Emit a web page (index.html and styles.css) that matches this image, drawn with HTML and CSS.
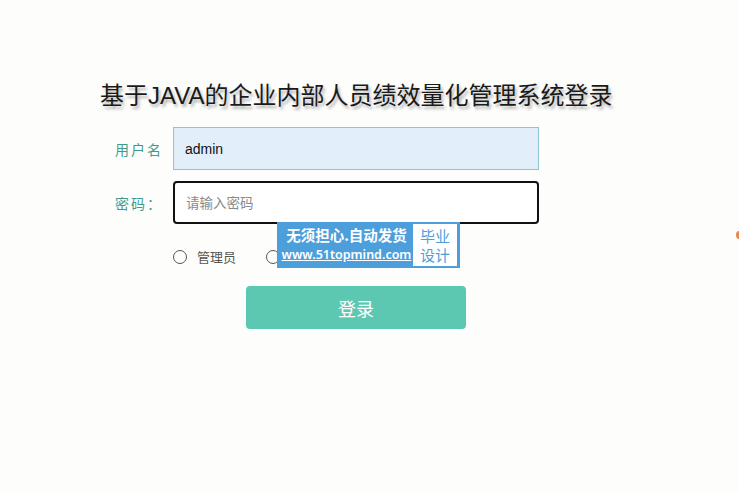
FILE: index.html
```html
<!DOCTYPE html>
<html lang="zh-CN">
<head>
  <meta charset="UTF-8" />
  <meta name="viewport" content="width=device-width, initial-scale=1.0" />
  <title>系统登录</title>
  <link rel="stylesheet" href="styles.css">
</head>
<body>
  <!-- Login Panel -->
  <div class="login">
    <h1 class="login-title">基于JAVA的企业内部人员绩效量化管理系统登录</h1>
    <form class="login-form">
      <div class="form-row">
        <label class="form-label">用户名</label>
        <input class="form-input filled" type="text" value="admin">
      </div>
      <div class="form-row">
        <label class="form-label">密码：</label>
        <input class="form-input focus" type="password" placeholder="请输入密码">
      </div>
      <div class="role-row">
        <label class="role"><span class="radio"></span>管理员</label>
        <label class="role"><span class="radio"></span></label>
      </div>
      <button class="login-btn" type="button">登录</button>
    </form>
  </div>
  <!-- Watermark badge -->
  <div class="badge">
    <div class="badge-main">
      <div class="badge-top">无须担心.自动发货</div>
      <div class="badge-url">www.51topmind.com</div>
    </div>
    <div class="badge-side">
      <span>毕业</span>
      <span>设计</span>
    </div>
  </div>
  <div class="edge-dot"></div>
</body>
</html>
```

FILE: styles.css
```css
/* Base */
* {
  margin: 0;
  padding: 0;
  box-sizing: border-box;
}
html, body {
  height: 100%;
  background: #fdfdfc;
  font-family: 'Microsoft YaHei', 'Noto Sans CJK SC', sans-serif;
  overflow: hidden;
}
/* Login Panel */
.login {
  padding: 80px 0 0 100px;
}
.login-title {
  font-size: 24px;
  font-weight: 400;
  color: #1a1a1a;
  line-height: 32px;
  text-shadow: 2px 3px 3px rgba(0,0,0,0.3);
  font-family: 'Liberation Sans', 'Noto Sans CJK SC', sans-serif;
}
.login-form {
  margin-top: 15px;
  width: 439px;
}
.form-row {
  display: flex;
  align-items: center;
  margin-bottom: 11px;
}
.form-label {
  width: 73px;
  padding-left: 15px;
  font-size: 14px;
  color: #3f9c8c;
  letter-spacing: 2px;
}
.form-input {
  width: 366px;
  height: 43px;
  padding: 0 11px;
  font-size: 14px;
  font-family: 'Liberation Sans', 'Noto Sans CJK SC', sans-serif;
  outline: none;
}
.form-input.filled {
  background: #e3eefb;
  border: 1px solid #8cc6cf;
  color: #111;
}
.form-input.focus {
  background: #fff;
  border: 2px solid #111;
  border-radius: 4px;
}
.form-input::placeholder {
  color: #8a8a8a;
  font-size: 13.5px;
}
.role-row {
  display: flex;
  gap: 30px;
  padding: 12px 0 0 73px;
}
.role {
  display: flex;
  align-items: center;
  font-size: 13px;
  color: #555;
}
.radio {
  width: 14px;
  height: 14px;
  border: 1px solid #555;
  border-radius: 50%;
  margin-right: 10px;
}
.login-btn {
  display: block;
  width: 220px;
  height: 43px;
  margin: 20px 0 0 146px;
  border: none;
  border-radius: 4px;
  background: #5dc8b1;
  color: #fff;
  font-size: 18px;
  font-family: 'Microsoft YaHei', 'Noto Sans CJK SC', sans-serif;
}
/* Watermark badge sitting over the form */
.badge {
  position: absolute;
  left: 277px;
  top: 222px;
  width: 183px;
  height: 46px;
  display: flex;
  align-items: center;
  background: #4d9fdc;
  padding: 2px 3px 2px 3px;
}
.badge-main {
  flex: 1;
  color: #fff;
  font-weight: 600;
  text-align: center;
  line-height: 20px;
}
.badge-top {
  font-size: 14.5px;
}
.badge-url {
  font-size: 12.5px;
  text-decoration: underline;
  font-family: 'Noto Sans', sans-serif;
}
.badge-side {
  width: 44px;
  height: 42px;
  display: flex;
  flex-direction: column;
  align-items: center;
  justify-content: center;
  background: #fff;
  color: #4d9fdc;
  font-size: 15px;
  line-height: 19px;
}
.edge-dot {
  position: absolute;
  left: 736px;
  top: 231px;
  width: 6px;
  height: 8px;
  border-radius: 50%;
  background: #e8894a;
}
```
